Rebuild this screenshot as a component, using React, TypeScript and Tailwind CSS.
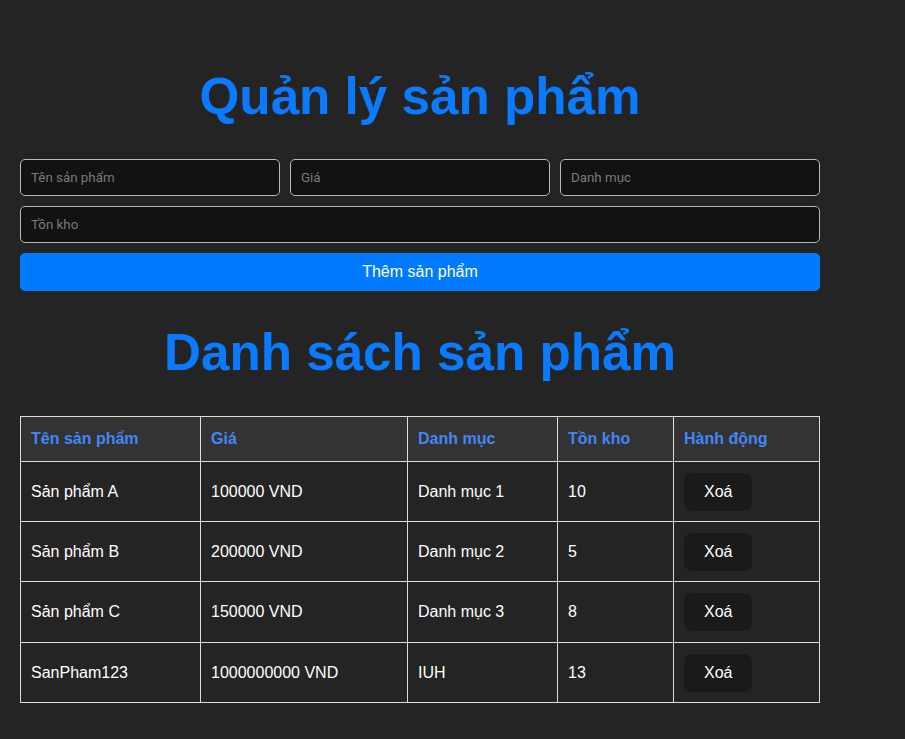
import React from "react";

const rows = [
  { name: "Sản phẩm A", price: "100000 VND", cat: "Danh mục 1", stock: "10" },
  { name: "Sản phẩm B", price: "200000 VND", cat: "Danh mục 2", stock: "5" },
  { name: "Sản phẩm C", price: "150000 VND", cat: "Danh mục 3", stock: "8" },
  { name: "SanPham123", price: "1000000000 VND", cat: "IUH", stock: "13" },
];

const inputCls =
  "h-[37px] w-full rounded-[5px] border border-[#b8b8b8] bg-[#121212] px-[10px] text-[13.33px] text-white outline-none placeholder:text-[#7a7a7a] [font-family:Roboto,'Noto_Sans',sans-serif]";

export default function App() {
  return (
    <div className="min-h-screen bg-[#242424] pt-[35px] text-white [font-family:'Liberation_Sans',Arial,sans-serif]">
      <div className="ml-[20px] w-[800px] pb-[37px]">
        <h1 className="my-[34px] text-center text-[51.2px] font-bold leading-[56px] text-[#0a7bff]">
          Quản lý sản phẩm
        </h1>
        <div className="flex flex-col gap-[10px]">
          <div className="grid grid-cols-3 gap-[10px]">
            <input className={inputCls} placeholder="Tên sản phẩm" />
            <input className={inputCls} placeholder="Giá" />
            <input className={inputCls} placeholder="Danh mục" />
          </div>
          <input className={inputCls} placeholder="Tồn kho" />
          <button className="h-[38px] w-full rounded-[5px] bg-[#007bff] text-[16px] text-white">
            Thêm sản phẩm
          </button>
        </div>
        <h1 className="mb-[35px] mt-[34px] text-center text-[51.2px] font-bold leading-[56px] text-[#0a7bff]">
          Danh sách sản phẩm
        </h1>
        <table className="w-[799px] table-fixed border-collapse text-[16px]">
          <colgroup>
            <col className="w-[180px]" />
            <col className="w-[207px]" />
            <col className="w-[150px]" />
            <col className="w-[116px]" />
            <col className="w-[146px]" />
          </colgroup>
          <thead>
            <tr className="h-[45px] bg-[#333333]">
              {["Tên sản phẩm", "Giá", "Danh mục", "Tồn kho", "Hành động"].map((h) => (
                <th
                  key={h}
                  className="border border-[#dddddd] px-[10px] text-left font-bold leading-[24px] text-[#4287f5]"
                >
                  {h}
                </th>
              ))}
            </tr>
          </thead>
          <tbody>
            {rows.map((r, i) => (
              <tr key={r.name} className={i === 2 ? "h-[61px]" : "h-[60px]"}>
                <td className="border border-[#dddddd] px-[10px]">{r.name}</td>
                <td className="border border-[#dddddd] px-[10px]">{r.price}</td>
                <td className="border border-[#dddddd] px-[10px]">{r.cat}</td>
                <td className="border border-[#dddddd] px-[10px]">{r.stock}</td>
                <td className="border border-[#dddddd] px-[10px]">
                  <button className="block h-[38px] rounded-[8px] bg-[#1a1a1a] px-[20px] text-[16px] text-white">
                    Xoá
                  </button>
                </td>
              </tr>
            ))}
          </tbody>
        </table>
      </div>
    </div>
  );
}
